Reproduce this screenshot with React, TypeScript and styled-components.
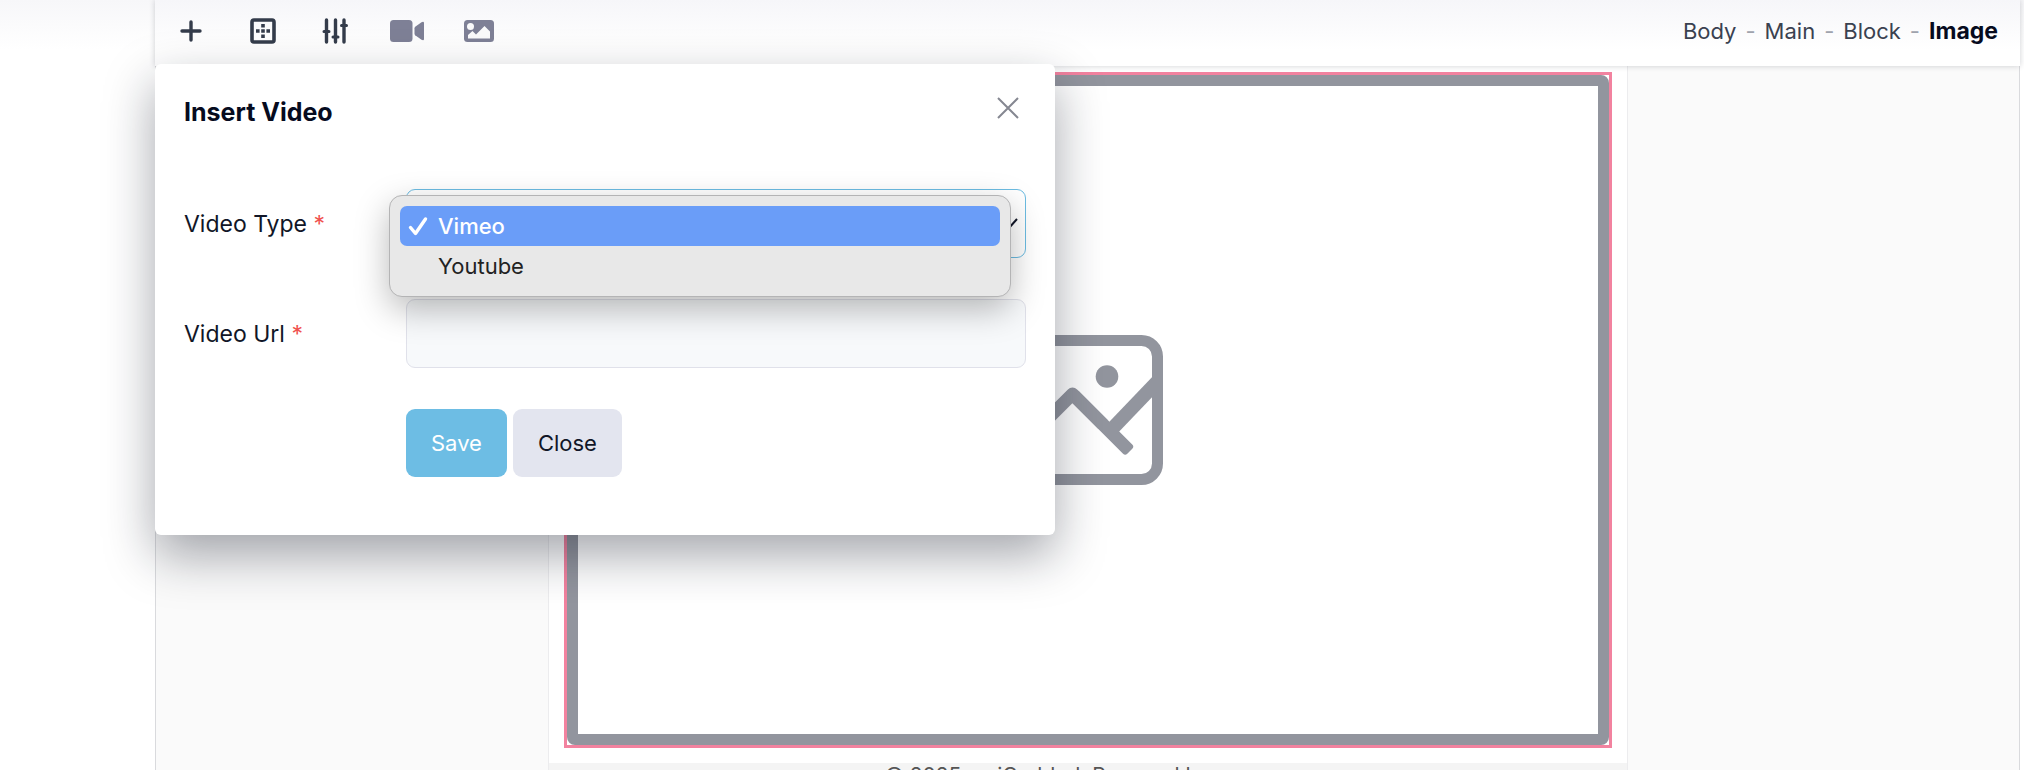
import React from "react";
import styled, { createGlobalStyle, css } from "styled-components";

const GlobalStyle = createGlobalStyle`
  *, *::before, *::after { box-sizing: border-box; }
  body {
    margin: 0;
    background: #fff;
    color: #0a1020;
    font-family: Inter, "Liberation Sans", sans-serif;
    font-size: 22px;
    line-height: 32px;
  }
  button, input, select { font: inherit; color: inherit; }
`;

const Shell = styled.div`
  display: flex;
  height: 100vh;
  overflow: hidden;
  background: linear-gradient(#f7f7f9, #fff 50px);
`;

const SidePanel = styled.aside`
  flex: 0 0 155px;
`;

const Workspace = styled.main`
  position: relative;
  display: flex;
  flex: 1;
  flex-direction: column;
  min-width: 0;
  margin-right: 4px;
`;

const Toolbar = styled.header`
  position: relative;
  display: flex;
  flex: none;
  align-items: center;
  justify-content: space-between;
  height: 66px;
  padding: 0 22px 4px 12px;
  background: linear-gradient(#f6f6f9, #fff 50px);
  box-shadow: 0 0 6px rgba(20, 25, 40, 0.2);
`;

const Tools = styled.div`
  display: flex;
  gap: 24px;
`;

const ToolButton = styled.button<{ $muted?: boolean }>`
  display: grid;
  place-items: center;
  width: 48px;
  height: 48px;
  padding: 0;
  border: 0;
  background: none;
  color: ${(p) => (p.$muted ? "#7e8096" : "#343c4b")};
`;

const Breadcrumb = styled.nav`
  display: flex;
  gap: 9px;
  color: #9fa3ad;
`;

const Crumb = styled.a<{ $current?: boolean }>`
  color: ${(p) => (p.$current ? "#060b1e" : "#3a4150")};
  font-size: ${(p) => (p.$current ? "23px" : "22px")};
  font-weight: ${(p) => (p.$current ? 700 : 400)};
  text-decoration: none;
`;

const Canvas = styled.section`
  flex: 1;
  min-height: 0;
  overflow: hidden;
  background: #fafafa;
  border: 1px solid #d9dadd;
  border-width: 0 1px;
`;

const Sheet = styled.article`
  max-width: 1080px;
  margin: 0 auto;
  background: #fff;
  border: 1px solid #ececee;
  border-width: 0 1px;
`;

const SheetBody = styled.div`
  padding: 6px 15px 15px;
`;

const SelectedBlock = styled.figure`
  margin: 0;
  border: 3px solid #f2829f;
`;

const Placeholder = styled.div`
  aspect-ratio: 1042 / 670;
  border: 11px solid #92959e;
  border-radius: 8px;
  background: #92959e;
`;

const PlaceholderInner = styled.div`
  display: grid;
  place-items: center;
  width: 100%;
  height: 100%;
  background: #fff;
`;

const SheetFooter = styled.footer`
  padding: 1px 0 30px;
  background: #f4f4f4;
  color: #555;
  font-size: 21px;
  line-height: 24px;
  text-align: center;
`;

const Dialog = styled.div`
  position: absolute;
  top: 64px;
  left: 0;
  width: 900px;
  max-width: 100%;
  padding: 29px 29px 58px;
  border-radius: 6px;
  background: #fff;
  box-shadow: 0 20px 50px rgba(15, 22, 38, 0.38);
`;

const DialogHead = styled.div`
  display: flex;
  align-items: flex-start;
  justify-content: space-between;
  height: 96px;
`;

const DialogTitle = styled.h2`
  margin: 3px 0 0;
  color: #060b1e;
  font-size: 25px;
  font-weight: 700;
`;

const CloseIconButton = styled.button`
  display: grid;
  place-items: center;
  width: 36px;
  height: 30px;
  padding: 0;
  border: 0;
  background: none;
  color: #858791;
`;

const Form = styled.form`
  display: grid;
  grid-template-columns: 222px 1fr;
  row-gap: 41px;
  align-items: center;
`;

const Label = styled.label`
  color: #111627;
  font-size: 23px;
`;

const Required = styled.span`
  color: #f0524f;
`;

const Field = styled.div`
  position: relative;
`;

const control = css`
  display: block;
  width: 100%;
  height: 69px;
  padding: 0 20px;
  border-radius: 9px;
  outline: 0;
`;

const Select = styled.select`
  ${control}
  appearance: none;
  border: 1px solid #6cbce2;
  background: #fff;
`;

const Chevron = styled.svg`
  position: absolute;
  top: 29px;
  right: 8px;
  pointer-events: none;
`;

const TextInput = styled.input`
  ${control}
  border: 1px solid #e0e1ea;
  background: #f7f9fb;
`;

const Menu = styled.ul`
  position: absolute;
  z-index: 2;
  top: 6px;
  left: -17px;
  right: 15px;
  height: 102px;
  margin: 0;
  padding: 10px;
  border: 1px solid #b4b4b5;
  border-radius: 13px;
  background: #e8e8e8;
  box-shadow: 0 12px 34px rgba(0, 0, 0, 0.28);
  list-style: none;
`;

const MenuItem = styled.li<{ $active?: boolean }>`
  display: grid;
  grid-template-columns: 30px 1fr;
  align-items: center;
  height: 40px;
  padding: 0 8px;
  border-radius: 7px;
  background: ${(p) => (p.$active ? "#6a9df8" : "transparent")};
  color: ${(p) => (p.$active ? "#fff" : "#222")};
  font-weight: ${(p) => (p.$active ? 500 : 400)};
`;

const Actions = styled.div`
  display: flex;
  grid-column: 2;
  gap: 6px;
`;

const Button = styled.button<{ $primary?: boolean }>`
  height: 68px;
  padding: 0 25px;
  border: 0;
  border-radius: 9px;
  background: ${(p) => (p.$primary ? "#6dbde4" : "#e3e5ef")};
  color: ${(p) => (p.$primary ? "#fff" : "#111627")};
`;

const PlusIcon = () => (
  <svg width="22" height="22" viewBox="0 0 22 22" fill="none" stroke="currentColor" strokeWidth="3.4" strokeLinecap="round">
    <path d="M11 2v18M2 11h18" />
  </svg>
);

const BorderIcon = () => (
  <svg width="26" height="26" viewBox="0 0 26 26" fill="currentColor">
    <rect x="2" y="2" width="22" height="22" rx="2" fill="none" stroke="currentColor" strokeWidth="3.6" />
    <path d="M11.2 6h3.6v3.6h-3.6zM11.2 11.2h3.6v3.6h-3.6zM11.2 16.4h3.6V20h-3.6zM6 11.2h3.6v3.6H6zM16.4 11.2H20v3.6h-3.6z" />
  </svg>
);

const SlidersIcon = () => (
  <svg width="26" height="26" viewBox="0 0 26 26" fill="none" stroke="currentColor" strokeWidth="3.4" strokeLinecap="round">
    <path d="M4.5 2v22M13.5 2v22M22 2v22" />
    <path d="M2 13.5h5M11 19h5M19.5 7.5h5" strokeWidth="3" />
  </svg>
);

const VideoIcon = () => (
  <svg width="34" height="22" viewBox="0 0 34 22" fill="currentColor">
    <rect width="22.5" height="22" rx="3.5" />
    <path d="M24.5 8.2Q24.5 7.3 25.2 6.7L31.5 2.2Q34 1 34 3V19Q34 21 31.5 19.8L25.2 15.3Q24.5 14.7 24.5 13.8Z" />
  </svg>
);

const ImageIcon = () => (
  <svg width="30" height="22" viewBox="0 0 30 22">
    <rect width="30" height="22" rx="3.5" fill="currentColor" />
    <circle cx="6.5" cy="6.5" r="3.5" fill="#fafafb" />
    <path d="M4 18.5v-3.5l4.5-4 3.5 3.500 8.5-8.500 5.500 5.500v7z" fill="#fafafb" />
  </svg>
);

const LargeImageIcon = () => (
  <svg width="150" height="150" viewBox="0 0 150 150" fill="none" stroke="#92959e" strokeWidth="11">
    <rect x="5.5" y="5.5" width="139" height="139" rx="16" />
    <path d="M5.5 113L59.5 59L90 89.5" strokeLinejoin="round" strokeWidth="13" />
    <rect x="0" y="-6.5" width="81" height="13" rx="3" transform="translate(59.5 59) rotate(45)" fill="#92959e" stroke="none" />
    <path d="M99 94L144 47" strokeWidth="14" />
    <circle cx="94" cy="41.5" r="11.3" fill="#92959e" stroke="none" />
  </svg>
);

const CheckIcon = () => (
  <svg width="20" height="20" viewBox="0 0 20 20" fill="none" stroke="currentColor" strokeWidth="3.4" strokeLinecap="round" strokeLinejoin="round">
    <path d="M2.5 11.5L7.5 17.5L17.5 3" />
  </svg>
);

export default function App() {
  return (
    <>
      <GlobalStyle />
      <Shell>
        <SidePanel />
        <Workspace>
          <Toolbar>
            <Tools>
              <ToolButton aria-label="Add"><PlusIcon /></ToolButton>
              <ToolButton aria-label="Outline"><BorderIcon /></ToolButton>
              <ToolButton aria-label="Settings"><SlidersIcon /></ToolButton>
              <ToolButton aria-label="Insert video" $muted><VideoIcon /></ToolButton>
              <ToolButton aria-label="Insert image" $muted><ImageIcon /></ToolButton>
            </Tools>
            <Breadcrumb aria-label="Selection path">
              <Crumb href="#body">Body</Crumb>
              <span>-</span>
              <Crumb href="#main">Main</Crumb>
              <span>-</span>
              <Crumb href="#block">Block</Crumb>
              <span>-</span>
              <Crumb href="#image" $current>Image</Crumb>
            </Breadcrumb>
          </Toolbar>

          <Canvas>
            <Sheet>
              <SheetBody>
                <SelectedBlock>
                  <Placeholder>
                    <PlaceholderInner><LargeImageIcon /></PlaceholderInner>
                  </Placeholder>
                </SelectedBlock>
              </SheetBody>
              <SheetFooter>© 2025 myiCrabled. Powered by grapes.</SheetFooter>
            </Sheet>
          </Canvas>

          <Dialog role="dialog" aria-labelledby="dialog-title">
            <DialogHead>
              <DialogTitle id="dialog-title">Insert Video</DialogTitle>
              <CloseIconButton aria-label="Dismiss">
                <svg width="22" height="22" viewBox="0 0 22 22" fill="none" stroke="currentColor" strokeWidth="2">
                  <path d="M1 1l20 20M21 1L1 21" />
                </svg>
              </CloseIconButton>
            </DialogHead>
            <Form onSubmit={(e) => e.preventDefault()}>
              <Label htmlFor="video-type">Video Type <Required>*</Required></Label>
              <Field>
                <Select id="video-type" defaultValue="vimeo">
                  <option value="vimeo">Vimeo</option>
                  <option value="youtube">Youtube</option>
                </Select>
                <Chevron width="18" height="12" viewBox="0 0 18 12" fill="none" stroke="#111627" strokeWidth="2">
                  <path d="M1 1l8 9 8-9" />
                </Chevron>
                <Menu role="listbox" aria-label="Video type options">
                  <MenuItem role="option" aria-selected $active><CheckIcon /><span>Vimeo</span></MenuItem>
                  <MenuItem role="option" aria-selected={false}><span /><span>Youtube</span></MenuItem>
                </Menu>
              </Field>
              <Label htmlFor="video-url">Video Url <Required>*</Required></Label>
              <TextInput id="video-url" type="text" required />
              <Actions>
                <Button type="submit" $primary>Save</Button>
                <Button type="button">Close</Button>
              </Actions>
            </Form>
          </Dialog>
        </Workspace>
      </Shell>
    </>
  );
}
